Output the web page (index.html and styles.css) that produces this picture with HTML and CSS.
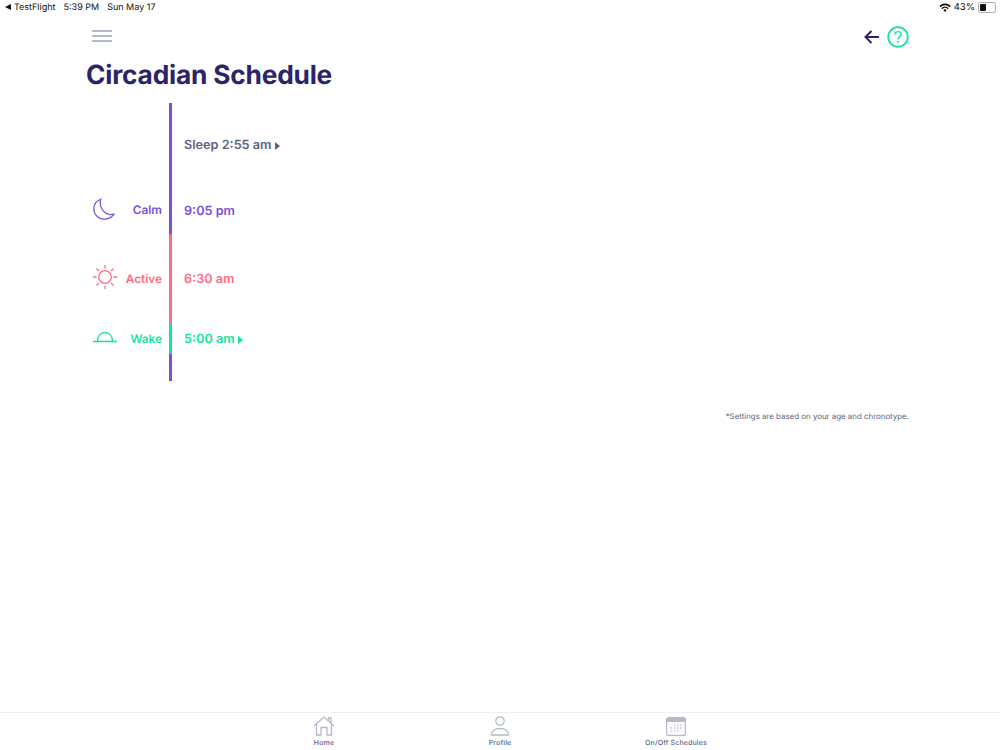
FILE: index.html
```html
<html>
  <head>
    <meta charset="utf-8" />
    <title>Circadian Schedule</title>
    <link rel="stylesheet" href="styles.css">
  </head>
  <body>
    <div class="status_bar">
      <div class="status_left">
        <span class="back_app"><span class="back_tri"></span>TestFlight</span>
        <span>5:39 PM</span>
        <span>Sun May 17</span>
      </div>
      <div class="status_right">
        <svg class="wifi" width="12" height="9" viewBox="0 0 12 9">
          <path d="M0.3 3 A8 8 0 0 1 11.7 3 L10.6 4.2 A6.4 6.4 0 0 0 1.4 4.2 Z" fill="#111"/>
          <path d="M2.3 5 A5.2 5.2 0 0 1 9.7 5 L8.6 6.2 A3.6 3.6 0 0 0 3.4 6.2 Z" fill="#111"/>
          <path d="M4.3 7 A2.4 2.4 0 0 1 7.7 7 L6 8.9 Z" fill="#111"/>
        </svg>
        <span>43%</span>
        <span class="battery"><span class="battery_fill"></span></span>
      </div>
    </div>

    <div class="page">
      <div class="top_row">
        <div class="menu_icon"><span></span><span></span><span></span></div>
        <div class="top_actions">
          <svg width="16" height="14" viewBox="0 0 16 14" fill="none" stroke="#2a2468" stroke-width="2">
            <path d="M15 7 H1.500 M7.500 1 L1.500 7 L7.500 13"/>
          </svg>
          <svg width="22" height="22" viewBox="0 0 22 22" fill="none">
            <circle cx="11" cy="11" r="9.800" stroke="#12e3a0" stroke-width="1.800"/>
            <path d="M7.800 8.600 C7.800 6.600 9.300 5.600 11 5.600 C12.800 5.600 14.200 6.800 14.200 8.400 C14.200 10.600 11 10.800 11 13.400" stroke="#12e3a0" stroke-width="1.400"/>
            <circle cx="11" cy="16" r="0.900" fill="#12e3a0"/>
          </svg>
        </div>
      </div>

      <h1>Circadian Schedule</h1>

      <div class="timeline">
        <div class="tl_row row_sleep">
          <div class="tl_left"></div>
          <div class="tl_bar"></div>
          <div class="tl_time">Sleep 2:55 am<span class="tri"></span></div>
        </div>
        <div class="tl_row row_calm">
          <div class="tl_left">
            <svg class="tl_icon" width="24" height="24" viewBox="0 0 26 26" fill="none" stroke="#7b4fd6" stroke-width="1.300">
              <path d="M9.500 2.500 C4.500 4.300 2 8.500 2 13 C2 19 7 24 13 24 C17.500 24 21.500 21.800 24.200 18.200 C22.500 19 20.500 19.200 18.500 18.800 C11.500 17.500 7.500 9.500 9.500 2.500 Z"/>
            </svg>
            <span class="tl_label">Calm</span>
          </div>
          <div class="tl_bar"></div>
          <div class="tl_time">9:05 pm</div>
        </div>
        <div class="tl_row row_active">
          <div class="tl_left">
            <svg class="tl_icon" width="26" height="26" viewBox="0 0 26 26" fill="none" stroke="#ff6b81" stroke-width="1.300">
              <circle cx="13" cy="13" r="6.300"/>
              <path d="M13 1 V4.500 M13 21.500 V25 M1 13 H4.500 M21.500 13 H25 M4.500 4.500 L7 7 M19 19 L21.500 21.500 M21.500 4.500 L19 7 M7 19 L4.500 21.500"/>
            </svg>
            <span class="tl_label">Active</span>
          </div>
          <div class="tl_bar"></div>
          <div class="tl_time">6:30 am</div>
        </div>
        <div class="tl_row row_wake">
          <div class="tl_left">
            <svg class="tl_icon" width="26" height="12" viewBox="0 0 26 12" fill="none" stroke="#12e3a0" stroke-width="1.300">
              <path d="M1 10.500 H25 M5.500 10.500 C5.500 5 8.500 1.500 13 1.500 C17.500 1.500 20.500 5 20.500 10.500"/>
            </svg>
            <span class="tl_label">Wake</span>
          </div>
          <div class="tl_bar"></div>
          <div class="tl_time">5:00 am<span class="tri"></span></div>
        </div>
        <div class="tl_row row_end">
          <div class="tl_left"></div>
          <div class="tl_bar"></div>
        </div>
      </div>

      <p class="note">*Settings are based on your age and chronotype.</p>
    </div>

    <div class="tab_bar">
      <div class="tab">
        <svg width="22" height="20" viewBox="0 0 22 20" fill="none" stroke="#b4b9cc" stroke-width="1.300">
          <path d="M1 10 L11 1 L21 10 M3.500 8 V19 H8 V11.500 H14 V19 H18.500 V8 M15.500 4.500 V2 H18 V7"/>
        </svg>
        <span>Home</span>
      </div>
      <div class="tab">
        <svg width="20" height="20" viewBox="0 0 20 20" fill="none" stroke="#b4b9cc" stroke-width="1.300">
          <circle cx="10" cy="5" r="4.200"/>
          <path d="M1.500 19 C1.500 15 5 12.500 10 12.500 C15 12.500 18.500 15 18.500 19 Z"/>
        </svg>
        <span>Profile</span>
      </div>
      <div class="tab">
        <svg width="20" height="20" viewBox="0 0 20 20" fill="none">
          <rect x="0.600" y="1.600" width="18.800" height="17.800" rx="2" stroke="#b4b9cc" stroke-width="1.200"/>
          <path d="M0.600 6 V3.600 C0.600 2.500 1.500 1.600 2.600 1.600 H17.400 C18.500 1.600 19.400 2.500 19.400 3.600 V6 Z" fill="#b4b9cc"/>
          <path d="M4 0.500 V2 M16 0.500 V2" stroke="#b4b9cc"/>
          <path d="M8 9 H9.500 M11 9 H12.500 M14 9 H15.500 M4.500 12 H6 M8 12 H9.500 M11 12 H12.500 M14 12 H15.500 M4.500 15 H6 M8 15 H9.500 M11 15 H12.500" stroke="#a0a5bb" stroke-width="1.100"/>
        </svg>
        <span>On/Off Schedules</span>
      </div>
    </div>
  </body>
</html>
```

FILE: styles.css
```css
html, body {
  height: 100%;
}
body {
  margin: 0;
  display: flex;
  flex-direction: column;
  height: 750px;
  overflow: hidden;
  background: white;
  color: #2a2468;
  font-family: Inter, "Liberation Sans", sans-serif;
  text-rendering: geometricPrecision;
}
.status_bar {
  display: flex;
  justify-content: space-between;
  align-items: center;
  height: 14px;
  padding: 0 4px 0 5px;
  font-size: 9px;
  color: #111;
}
.status_left {
  display: flex;
  gap: 8px;
}
.back_app {
  display: flex;
  align-items: center;
  gap: 3px;
}
.back_tri {
  width: 0;
  height: 0;
  border-top: 3px solid transparent;
  border-bottom: 3px solid transparent;
  border-right: 6px solid #111;
}
.status_right {
  display: flex;
  align-items: center;
  gap: 3px;
  font-size: 9.5px;
}
.battery {
  display: block;
  width: 14px;
  height: 7px;
  padding: 1px;
  border: 1px solid #aaa;
  border-radius: 2.5px;
}
.battery_fill {
  display: block;
  width: 6px;
  height: 7px;
  background: #111;
  border-radius: 1px;
}
.page {
  flex: 1;
  padding: 0 90px 0 86px;
}
.top_row {
  display: flex;
  justify-content: space-between;
  align-items: center;
  height: 44px;
}
.menu_icon {
  display: flex;
  flex-direction: column;
  gap: 3.5px;
  width: 20px;
  margin-left: 6px;
}
.menu_icon span {
  display: block;
  height: 1.5px;
  background: #b4b9cc;
}
.top_actions {
  display: flex;
  align-items: center;
  gap: 7px;
  margin-top: 2px;
  margin-right: 1px;
}
h1 {
  margin: 0;
  height: 45px;
  font-size: 26.3px;
  line-height: 36px;
  font-weight: 700;
  letter-spacing: -0.2px;
  color: #2a2468;
}
.timeline {
  display: flex;
  flex-direction: column;
}
.tl_row {
  display: flex;
  align-items: stretch;
}
.tl_left {
  display: flex;
  align-items: center;
  justify-content: space-between;
  width: 70px;
  padding-left: 6px;
  font-size: 11.8px;
  font-weight: 600;
}
.tl_icon {
  margin-bottom: 3px;
}
.tl_bar {
  width: 2.5px;
  margin-left: 7px;
}
.tl_time {
  display: flex;
  align-items: center;
  margin-left: 12.5px;
  padding-top: 2px;
  font-size: 12.7px;
  font-weight: 600;
}
.tri {
  width: 0;
  height: 0;
  margin-left: 3px;
  border-top: 4px solid transparent;
  border-bottom: 4px solid transparent;
  border-left: 5px solid currentColor;
}
.row_sleep {
  height: 83px;
  color: #5c6380;
}
.row_sleep .tl_bar,
.row_end .tl_bar {
  background: #7b4fd6;
}
.row_calm {
  height: 48px;
  color: #7b4fd6;
}
.row_calm .tl_bar {
  background: #7b4fd6;
}
.row_active {
  height: 89px;
  color: #ff6b81;
}
.row_active .tl_bar {
  background: #ff6b81;
}
.row_wake {
  height: 31px;
  color: #12e3a0;
}
.row_wake .tl_bar {
  background: #12e3a0;
}
.row_end {
  height: 27px;
}
.note {
  margin: 28px 1px 0 0;
  font-size: 7.9px;
  line-height: 14px;
  text-align: right;
  color: #5c6380;
}
.tab_bar {
  display: flex;
  justify-content: center;
  height: 34px;
  border-top: 1px solid #f0f0f3;
  padding-top: 3px;
}
.tab {
  display: flex;
  flex-direction: column;
  align-items: center;
  gap: 2px;
  width: 176px;
  font-size: 7px;
  font-weight: 500;
  letter-spacing: 0.15px;
  color: #5c6380;
}
```
